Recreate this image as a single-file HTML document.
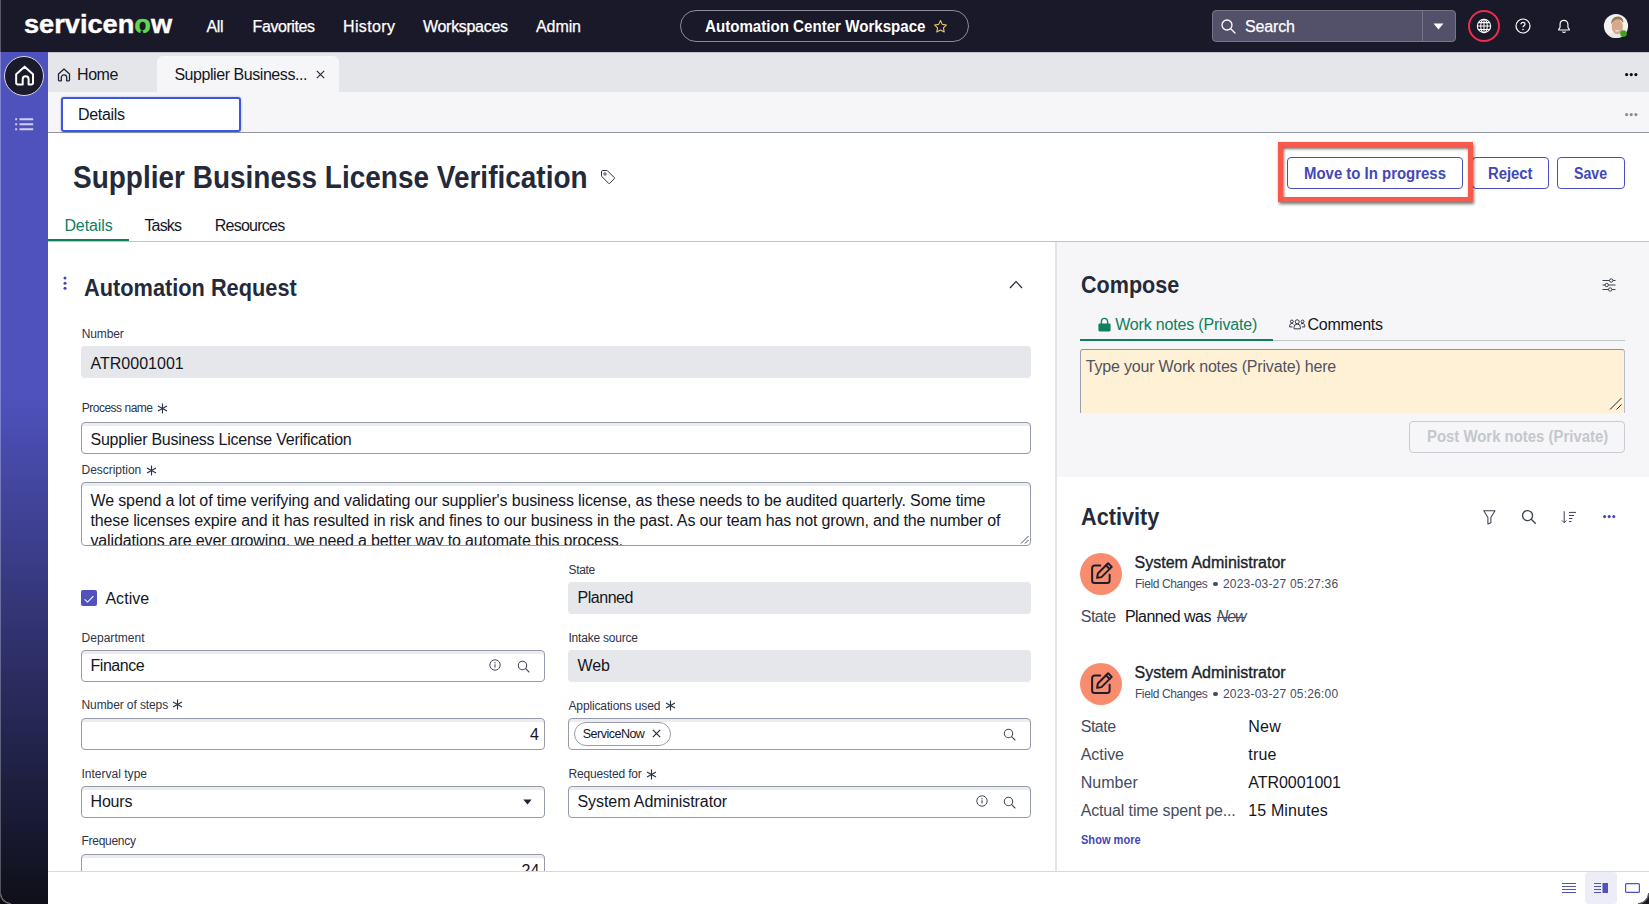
<!DOCTYPE html>
<html lang="en">
<head>
<meta charset="utf-8">
<title>Supplier Business License Verification | Automation Center Workspace</title>
<style>
*{box-sizing:border-box;margin:0;padding:0}
html,body{width:1649px;height:904px;overflow:hidden;background:#fff}
body{font-family:"Liberation Sans",sans-serif;color:#14161f;position:relative;font-size:16px}
.abs{position:absolute}
.t{position:absolute;white-space:nowrap;line-height:1;transform-origin:0 50%}
svg{position:absolute;overflow:visible}
/* top bar */
#topbar{left:0;top:0;width:1649px;height:52px;background:#1a1929}
#topbar .t{color:#fff}
#pill{left:680px;top:10px;width:289px;height:32px;border:1px solid #8b8b99;border-radius:16px}
#search{left:1212px;top:10px;width:244px;height:32px;background:#535069;border:1px solid #77758a;border-radius:4px}
#searchdiv{left:1422px;top:10px;width:1px;height:32px;background:#77758a}
/* sidebar */
#sidebar{left:0;top:52px;width:48px;height:852px;background:linear-gradient(180deg,#4f52bd 0%,#4f52bd 40%,#17182e 92%,#0e0f18 100%)}
#homebtn{left:4px;top:56px;width:40px;height:40px;border-radius:50%;background:#1b1a2b;border:1px solid #d4d4e4}
/* tab bar */
#tabbar{left:48px;top:52px;width:1601px;height:40px;background:#e5e6ea;border-top:1px solid #c3c5cd}
#tab2{left:157px;top:56px;width:182px;height:36px;background:#f6f6f8;border-radius:6px 6px 0 0}
#subbar{left:48px;top:92px;width:1601px;height:41px;background:#f6f6f8;border-bottom:1px solid #9096a4}
#detailsbox{left:61px;top:97px;width:180px;height:35px;background:#fff;border:2px solid #3f57e0;border-radius:3px;box-shadow:0 0 2px rgba(63,87,224,.5)}
/* header */
.btn{position:absolute;height:32px;top:157px;border:1px solid #4a4fc0;border-radius:4px;background:#fff}
.btxt{color:#4347b8;font-weight:bold;font-size:16px}
#hl{left:1278px;top:142px;width:195px;height:60px;border:5px solid #f8594a;box-shadow:1px 2px 3px rgba(0,0,0,.55),inset 1px 2px 3px rgba(0,0,0,.55)}
#tabline{left:48px;top:241px;width:1601px;height:1px;background:#c0c3cc}
#tabsel{left:48px;top:239px;width:81px;height:2px;background:#0e8060}
/* panels */
#vsep{left:1055px;top:242px;width:2px;height:629px;background:#e3e4e9}
#compose{left:1057px;top:242px;width:592px;height:235px;background:#f6f6f8}
.ro{position:absolute;background:#e6e7ea;border-radius:4px;height:32px}
.inp{position:absolute;background:#fff;border:1px solid #959bac;border-radius:4px;height:32px;box-shadow:inset 0 3px 0 #ececee}
.lbl{font-size:12.5px;color:#2e3447}
.val{font-size:16px;color:#1f2536}
#bottombar{left:48px;top:871px;width:1601px;height:33px;background:#fff;border-top:1px solid #d8dae0}
#notes{left:1080px;top:349px;width:545px;height:64px;background:#fff1d6;border-top:1px solid #8d91a2;border-left:1px solid #9a9eae;border-right:1px solid #b9bcc6;border-radius:3px 3px 0 0}
#cornerR{left:1638px;top:893px;width:11px;height:11px;background:radial-gradient(circle at 0 0,rgba(0,0,0,0) 9.500px,#77777c 10px,#55555a 10.800px,#18181c 11.800px)}
#cornerL{left:0;top:893px;width:11px;height:11px;background:radial-gradient(circle at 100% 0,rgba(0,0,0,0) 9.500px,#77777c 10px,#55555a 10.800px,#0a0a0c 11.800px)}
#edgeL{left:0;top:0;width:1px;height:894px;background:rgba(255,255,255,.28)}
</style>
</head>
<body>
<div class="abs" id="topbar"></div>
<div class="abs" id="sidebar"></div>
<div class="abs" id="tabbar"></div>
<div class="abs" id="tab2"></div>
<div class="abs" id="subbar"></div>
<div class="abs" id="detailsbox"></div>
<div class="abs" id="tabline"></div>
<div class="abs" id="tabsel"></div>
<div class="abs" id="compose"></div>
<div class="abs" id="vsep"></div>
<div class="t" id="logo" style="left:24.4px;top:12px;font-size:25.5px;font-weight:bold;color:#fff;transform:scaleX(1.066);-webkit-text-stroke:0.4px #fff">servicen<span style="color:#62d84e;-webkit-text-stroke-color:#62d84e">o</span>w</div>
<svg style="left:140.200px;top:29.800px" width="3.600" height="4" viewBox="0 0 3.600 4"><path d="M0 4L.8 .500h2L3.600 4z" fill="#1a1929"/></svg>
<div class="t" style="left:206.4px;top:19px;font-size:16px;letter-spacing:-0.291px;color:#fff;-webkit-text-stroke:0.25px #fff">All</div>
<div class="t" style="left:252.6px;top:19px;font-size:16px;letter-spacing:-0.425px;color:#fff;-webkit-text-stroke:0.25px #fff">Favorites</div>
<div class="t" style="left:343px;top:19px;font-size:16px;letter-spacing:0.370px;color:#fff;-webkit-text-stroke:0.25px #fff">History</div>
<div class="t" style="left:423px;top:19px;font-size:16px;letter-spacing:-0.304px;color:#fff;-webkit-text-stroke:0.25px #fff">Workspaces</div>
<div class="t" style="left:536px;top:19px;font-size:16px;letter-spacing:-0.090px;color:#fff;-webkit-text-stroke:0.25px #fff">Admin</div>
<div class="abs" id="pill"></div>
<div class="t" style="left:705px;top:19px;font-size:16px;transform:scaleX(0.9442);color:#fff;font-weight:bold">Automation Center Workspace</div>
<svg style="left:933px;top:19px" width="15" height="15" viewBox="0 0 24 24"><path d="M12 2.500l2.900 6.100 6.600.9-4.800 4.600 1.200 6.600L12 17.500l-5.900 3.200 1.200-6.600L2.500 9.500l6.600-.9z" fill="none" stroke="#e9c46a" stroke-width="1.800" stroke-linejoin="round"/></svg>
<div class="abs" id="search"></div>
<div class="abs" id="searchdiv"></div>
<svg style="left:1220px;top:18px" width="17" height="17" viewBox="0 0 17 17"><circle cx="7" cy="7" r="5" fill="none" stroke="#fff" stroke-width="1.300"/><path d="M10.700 10.700L15 15" stroke="#fff" stroke-width="1.300" stroke-linecap="round"/></svg>
<div class="t" style="left:1245px;top:19px;font-size:16px;letter-spacing:-0.141px;color:#fff;-webkit-text-stroke:0.25px #fff">Search</div>
<svg style="left:1433px;top:23px" width="11" height="7" viewBox="0 0 11 7"><path d="M0.500 0.500h10L5.500 6.500z" fill="#fff"/></svg>
<svg style="left:1466.800px;top:9.300px" width="34" height="34" viewBox="0 0 34 34"><circle cx="17" cy="17" r="15" fill="none" stroke="#ee2f4a" stroke-width="2"/><g fill="none" stroke="#fff" stroke-width="1.050"><circle cx="17" cy="17" r="6.700"/><ellipse cx="17" cy="17" rx="3.300" ry="6.700"/><path d="M10.300 17h13.400M11.300 13.600h11.400M11.300 20.400h11.400M17 10.300v13.400"/></g></svg>
<svg style="left:1515.400px;top:17.500px" width="16" height="16" viewBox="0 0 16 16"><circle cx="8" cy="8" r="7" fill="none" stroke="#fff" stroke-width="1.200"/><path d="M6 6.300c0-1.200.9-2 2-2s2 .8 2 1.900c0 1.500-2 1.600-2 3.100" fill="none" stroke="#fff" stroke-width="1.200"/><circle cx="8" cy="11.500" r=".800" fill="#fff"/></svg>
<svg style="left:1556.700px;top:19px" width="14" height="15" viewBox="0 0 16 17"><path d="M8 1.500c-2.800 0-4.500 2-4.500 4.600v3.200L2 11.800v.7h12v-.7l-1.500-2.500V6.100c0-2.600-1.700-4.600-4.500-4.600z" fill="none" stroke="#fff" stroke-width="1.300" stroke-linejoin="round"/><path d="M6.300 14.200c.3.800.9 1.200 1.700 1.200s1.400-.4 1.700-1.200" fill="none" stroke="#fff" stroke-width="1.300"/></svg>
<svg style="left:1603px;top:13.300px" width="26" height="26" viewBox="0 0 26 26"><defs><clipPath id="avc"><circle cx="13" cy="13" r="12.100"/></clipPath></defs><circle cx="13" cy="13" r="12.100" fill="#f4f2f1"/><g clip-path="url(#avc)"><path d="M3 26c1-4 4-6.500 10.500-6.500S23 22 24 26z" fill="#e9e7e6"/><ellipse cx="14.300" cy="13.800" rx="5.600" ry="7.400" fill="#d8a88c"/><path d="M8.300 11.500c-.6-5 2.500-8 6.500-8 3.500 0 6 2.500 5.400 6.500-1.500-2.500-3-3.500-5.500-3.500-3 0-5 2-6.400 5z" fill="#9a7654"/><path d="M11.500 17.200c1.500 1.600 4.300 1.600 5.800-.2-1.600.6-4.200.7-5.800.2z" fill="#fff"/></g><circle cx="20.500" cy="20.600" r="3.300" fill="#3fa51f"/></svg>
<div class="abs" id="homebtn"></div>
<svg style="left:12.500px;top:64.300px" width="23.200" height="23.200" viewBox="0 0 22 22"><path d="M3 9.700L11 2.500l8 7.200v8.100a1.700 1.700 0 0 1-1.700 1.700h-2.500v-5.100a2.800 2.800 0 0 0-5.600 0v5.100H4.700A1.700 1.700 0 0 1 3 17.800z" fill="none" stroke="#fff" stroke-width="1.900" stroke-linejoin="round"/></svg>
<svg style="left:15px;top:117px" width="19" height="14" viewBox="0 0 19 14"><g stroke="#cfd0ef" stroke-width="1.900"><path d="M.2 2.200h1.900M4.500 2.200H18.200M.2 7.200h1.900M4.500 7.200H18.200M.2 12.200h1.900M4.500 12.200H18.200"/></g></svg>
<svg style="left:57px;top:68px" width="14" height="14" viewBox="0 0 14 14"><path d="M1.500 6L7 1l5.500 5v6a.8.800 0 0 1-.8.800H9.700V9.500a2.700 2.700 0 0 0-5.400 0v3.300H2.300a.8.800 0 0 1-.8-.8z" fill="none" stroke="#1f2536" stroke-width="1.300" stroke-linejoin="round"/></svg>
<div class="t" style="left:77px;top:67px;font-size:16px;letter-spacing:-0.429px">Home</div>
<div class="t" style="left:174.4px;top:67px;font-size:16px;letter-spacing:-0.442px">Supplier Business...</div>
<svg style="left:316px;top:70px" width="9" height="9" viewBox="0 0 9 9"><path d="M.8.800l7.400 7.400M8.200.800L.8 8.200" stroke="#1f2536" stroke-width="1.100"/></svg>
<svg style="left:1624.5px;top:72.6px" width="12.600" height="3.200" viewBox="0 0 12.600 3.200"><circle cx="1.600" cy="1.600" r="1.600" fill="#0c0d14"/><circle cx="6.250" cy="1.600" r="1.600" fill="#0c0d14"/><circle cx="10.900" cy="1.600" r="1.600" fill="#0c0d14"/></svg>
<div class="t" style="left:78px;top:107px;font-size:16px;letter-spacing:-0.318px">Details</div>
<svg style="left:1624.5px;top:112.5px" width="12.600" height="3.200" viewBox="0 0 12.600 3.200"><circle cx="1.600" cy="1.600" r="1.600" fill="#8a8b94"/><circle cx="6.250" cy="1.600" r="1.600" fill="#8a8b94"/><circle cx="10.900" cy="1.600" r="1.600" fill="#8a8b94"/></svg>
<div class="t" style="left:72.7px;top:162px;font-size:31.5px;transform:scaleX(0.8881);color:#252a3a;font-weight:bold">Supplier Business License Verification</div>
<svg style="left:600px;top:169px" width="16" height="16" viewBox="0 0 16 16"><path d="M1.500 2.500a1 1 0 0 1 1-1h4.300a1 1 0 0 1 .7.300l6.700 6.700a1 1 0 0 1 0 1.400l-4.300 4.300a1 1 0 0 1-1.400 0L1.800 7.500a1 1 0 0 1-.3-.7z" fill="none" stroke="#2d3344" stroke-width="1"/><circle cx="5" cy="5" r="1.200" fill="none" stroke="#2d3344" stroke-width=".900"/></svg>
<div class="btn" style="left:1287px;width:176px"></div>
<div class="t" style="left:1303.8px;top:166px;font-size:16px;transform:scaleX(0.9340);color:#4347b8;font-weight:bold">Move to In progress</div>
<div class="btn" style="left:1472px;width:77px"></div>
<div class="t" style="left:1487.8px;top:166px;font-size:16px;transform:scaleX(0.9265);color:#4347b8;font-weight:bold">Reject</div>
<div class="btn" style="left:1557px;width:68px"></div>
<div class="t" style="left:1574.2px;top:166px;font-size:16px;transform:scaleX(0.8856);color:#4347b8;font-weight:bold">Save</div>
<div class="abs" id="hl"></div>
<div class="t" style="left:64.4px;top:218px;font-size:16px;letter-spacing:-0.084px;color:#0e8060">Details</div>
<div class="t" style="left:144.4px;top:218px;font-size:16px;letter-spacing:-0.827px">Tasks</div>
<div class="t" style="left:214.7px;top:218px;font-size:16px;letter-spacing:-0.736px">Resources</div>
<svg style="left:63px;top:276px" width="4" height="14" viewBox="0 0 4 14"><circle cx="2" cy="2" r="1.500" fill="#4347b8"/><circle cx="2" cy="7.200" r="1.500" fill="#4347b8"/><circle cx="2" cy="12.200" r="1.500" fill="#4347b8"/></svg>
<div class="t" style="left:83.5px;top:276px;font-size:24px;transform:scaleX(0.9066);color:#252a3a;font-weight:bold">Automation Request</div>
<svg style="left:1008.500px;top:280.200px" width="14" height="9" viewBox="0 0 14 9"><path d="M1 8l6-6.500L13 8" fill="none" stroke="#1f2536" stroke-width="1.150"/></svg>
<div class="t" style="left:81.75px;top:328px;font-size:12px;letter-spacing:-0.138px;color:#2e3447">Number</div>
<div class="ro" style="left:81px;top:346px;width:950px"></div>
<div class="t" style="left:90.5px;top:356px;font-size:16px;letter-spacing:0.016px">ATR0001001</div>
<div class="t" style="left:81.75px;top:402px;font-size:12px;letter-spacing:-0.496px;color:#2e3447">Process name</div>
<svg style="left:157.0px;top:403.3px" width="11" height="11" viewBox="0 0 11 11"><path d="M5.500 .600v9.800M1 2.900l9 5.200M10 2.900l-9 5.200" stroke="#2e3447" stroke-width="1.150" fill="none"/></svg>
<div class="inp" style="left:81px;top:422px;width:950px"></div>
<div class="t" style="left:90.5px;top:432px;font-size:16px;letter-spacing:-0.247px">Supplier Business License Verification</div>
<div class="t" style="left:81.5px;top:464px;font-size:12px;letter-spacing:-0.033px;color:#2e3447">Description</div>
<svg style="left:145.5px;top:465.1px" width="11" height="11" viewBox="0 0 11 11"><path d="M5.500 .600v9.800M1 2.900l9 5.200M10 2.900l-9 5.200" stroke="#2e3447" stroke-width="1.150" fill="none"/></svg>
<div class="inp" style="left:81px;top:482px;width:950px;height:64px;overflow:hidden"><div class="t dl" style="left:8.5px;top:10px;font-size:16px;letter-spacing:-0.134px;color:#14161f">We spend a lot of time verifying and validating our supplier's business license, as these needs to be audited quarterly. Some time</div><div class="t dl" style="left:8.5px;top:30px;font-size:16px;letter-spacing:-0.147px;color:#14161f">these licenses expire and it has resulted in risk and fines to our business in the past. As our team has not grown, and the number of</div><div class="t dl" style="left:8.5px;top:50px;font-size:16px;letter-spacing:-0.145px;color:#14161f">validations are ever growing, we need a better way to automate this process.</div></div>
<svg style="left:1020px;top:535px" width="9" height="9" viewBox="0 0 9 9"><path d="M8.500 1L1 8.500M8.500 5L5 8.500" stroke="#4b5060" stroke-width="1"/></svg>
<div class="abs" style="left:81px;top:590px;width:16px;height:16px;background:#4f52bd;border-radius:2px"></div><svg style="left:84px;top:594.500px" width="10" height="8" viewBox="0 0 10 8"><path d="M.6 4.300l3 2.800L9.400 1.200" fill="none" stroke="#fff" stroke-width="1.050"/></svg>
<div class="t" style="left:105.4px;top:591px;font-size:16px;letter-spacing:0.044px">Active</div>
<div class="t" style="left:568.5px;top:564px;font-size:12px;letter-spacing:-0.333px;color:#2e3447">State</div>
<div class="ro" style="left:568px;top:582px;width:463px"></div>
<div class="t" style="left:577.5px;top:590px;font-size:16px;letter-spacing:-0.470px">Planned</div>
<div class="t" style="left:81.5px;top:632px;font-size:12px;letter-spacing:0.044px;color:#2e3447">Department</div>
<div class="inp" style="left:81px;top:650px;width:464px"></div>
<div class="t" style="left:90.5px;top:658px;font-size:16px;letter-spacing:-0.470px">Finance</div>
<svg style="left:489.2px;top:659.2px" width="12" height="12" viewBox="0 0 12 12"><circle cx="6" cy="6" r="5.200" fill="none" stroke="#454b5c" stroke-width="1"/><path d="M6 5.300v3.200" stroke="#454b5c" stroke-width="1.100"/><circle cx="6" cy="3.700" r=".700" fill="#454b5c"/></svg>
<svg style="left:516.5px;top:659.5px" width="13" height="13" viewBox="0 0 13 13"><circle cx="5.500" cy="5.500" r="4.200" fill="none" stroke="#454b5c" stroke-width="1.100"/><path d="M8.600 8.600l3.400 3.400" stroke="#454b5c" stroke-width="1.100" stroke-linecap="round"/></svg>
<div class="t" style="left:568.5px;top:632px;font-size:12px;letter-spacing:-0.212px;color:#2e3447">Intake source</div>
<div class="ro" style="left:568px;top:650px;width:463px"></div>
<div class="t" style="left:577.5px;top:658px;font-size:16px;letter-spacing:-0.055px">Web</div>
<div class="t" style="left:81.5px;top:699px;font-size:12px;letter-spacing:-0.096px;color:#2e3447">Number of steps</div>
<svg style="left:171.8px;top:699.4px" width="11" height="11" viewBox="0 0 11 11"><path d="M5.500 .600v9.800M1 2.900l9 5.200M10 2.900l-9 5.200" stroke="#2e3447" stroke-width="1.150" fill="none"/></svg>
<div class="inp" style="left:81px;top:718px;width:464px"></div>
<div class="t" style="left:530px;top:727px;font-size:16px;letter-spacing:0.394px">4</div>
<div class="t" style="left:568.5px;top:700px;font-size:12px;letter-spacing:-0.135px;color:#2e3447">Applications used</div>
<svg style="left:664.8px;top:700.4px" width="11" height="11" viewBox="0 0 11 11"><path d="M5.500 .600v9.800M1 2.900l9 5.200M10 2.900l-9 5.200" stroke="#2e3447" stroke-width="1.150" fill="none"/></svg>
<div class="inp" style="left:568px;top:718px;width:463px"></div>
<div class="abs" style="left:574px;top:722px;width:97px;height:24px;border:1px solid #9a9ead;border-radius:12px;background:#fff"></div>
<div class="t" style="left:582.8px;top:728px;font-size:12.5px;letter-spacing:-0.510px">ServiceNow</div>
<svg style="left:652px;top:729px" width="9" height="9" viewBox="0 0 9 9"><path d="M.8.800l7.400 7.400M8.200.800L.8 8.200" stroke="#1f2536" stroke-width="1.100"/></svg>
<svg style="left:1003.3px;top:727.8px" width="13" height="13" viewBox="0 0 13 13"><circle cx="5.500" cy="5.500" r="4.200" fill="none" stroke="#454b5c" stroke-width="1.100"/><path d="M8.600 8.600l3.400 3.400" stroke="#454b5c" stroke-width="1.100" stroke-linecap="round"/></svg>
<div class="t" style="left:81.5px;top:768px;font-size:12px;letter-spacing:0.010px;color:#2e3447">Interval type</div>
<div class="inp" style="left:81px;top:786px;width:464px"></div>
<div class="t" style="left:90.5px;top:794px;font-size:16px;letter-spacing:-0.172px">Hours</div>
<svg style="left:523px;top:799px" width="9" height="6" viewBox="0 0 9 6"><path d="M.3.500h8.400L4.500 5.500z" fill="#1f2536"/></svg>
<div class="t" style="left:568.5px;top:768px;font-size:12px;letter-spacing:-0.174px;color:#2e3447">Requested for</div>
<svg style="left:646.2px;top:768.7px" width="11" height="11" viewBox="0 0 11 11"><path d="M5.500 .600v9.800M1 2.900l9 5.200M10 2.900l-9 5.200" stroke="#2e3447" stroke-width="1.150" fill="none"/></svg>
<div class="inp" style="left:568px;top:786px;width:463px"></div>
<div class="t" style="left:577.5px;top:794px;font-size:16px;letter-spacing:-0.077px">System Administrator</div>
<svg style="left:976px;top:795.2px" width="12" height="12" viewBox="0 0 12 12"><circle cx="6" cy="6" r="5.200" fill="none" stroke="#454b5c" stroke-width="1"/><path d="M6 5.300v3.200" stroke="#454b5c" stroke-width="1.100"/><circle cx="6" cy="3.700" r=".700" fill="#454b5c"/></svg>
<svg style="left:1003.3px;top:795.5px" width="13" height="13" viewBox="0 0 13 13"><circle cx="5.500" cy="5.500" r="4.200" fill="none" stroke="#454b5c" stroke-width="1.100"/><path d="M8.600 8.600l3.400 3.400" stroke="#454b5c" stroke-width="1.100" stroke-linecap="round"/></svg>
<div class="t" style="left:81.5px;top:835px;font-size:12px;letter-spacing:-0.288px;color:#2e3447">Frequency</div>
<div class="inp" style="left:81px;top:854px;width:464px"></div>
<div class="t" style="left:521.5px;top:863px;font-size:16px;letter-spacing:0.003px">24</div>
<div class="t" style="left:1080.7px;top:273px;font-size:24px;transform:scaleX(0.8989);color:#252a3a;font-weight:bold">Compose</div>
<svg style="left:1602px;top:278px" width="14" height="14" viewBox="0 0 14 14"><g fill="none" stroke="#3a4052" stroke-width="1"><path d="M.5 2.500h7M11 2.500h2.500M.5 7h2.500M6.500 7h7M.5 11.500h6M10 11.500h3.500"/><circle cx="9.200" cy="2.500" r="1.700"/><circle cx="4.700" cy="7" r="1.700"/><circle cx="8.200" cy="11.500" r="1.700"/></g></svg>
<div class="abs" style="left:1080px;top:340px;width:545px;height:1px;background:#c4c6ce"></div>
<div class="abs" style="left:1080px;top:339px;width:193px;height:2px;background:#0e8060"></div>
<svg style="left:1098px;top:317px" width="13" height="15" viewBox="0 0 13 15"><path d="M3.400 7V4.500a3.100 3.100 0 0 1 6.200 0V7" fill="none" stroke="#0e8060" stroke-width="1.400"/><rect x=".4" y="6.600" width="12.200" height="7.800" rx="1.300" fill="#0e8060"/></svg>
<div class="t" style="left:1115.2px;top:317px;font-size:16px;letter-spacing:-0.181px;color:#0e8060">Work notes (Private)</div>
<svg style="left:1289.300px;top:319.300px" width="16.400" height="10.500" viewBox="0 0 17 11"><g fill="none" stroke="#1f2536" stroke-width=".950"><circle cx="8.500" cy="2.900" r="2.100"/><path d="M5.200 10.300V8.600a3.300 3.300 0 0 1 6.600 0v1.700z"/><circle cx="2.900" cy="2.600" r="1.500"/><path d="M.6 8.300V6.900a2.300 2.300 0 0 1 4.100-1.400M.6 8.300h3"/><circle cx="14.100" cy="2.600" r="1.500"/><path d="M16.400 8.300V6.900a2.300 2.300 0 0 0-4.100-1.400M16.400 8.300h-3"/></g></svg>
<div class="t" style="left:1307.6px;top:317px;font-size:16px;letter-spacing:-0.280px">Comments</div>
<div class="abs" id="notes"></div>
<div class="t" style="left:1085.7px;top:359px;font-size:16px;letter-spacing:-0.180px;color:#50545f">Type your Work notes (Private) here</div>
<svg style="left:1609px;top:397px" width="13" height="13" viewBox="0 0 13 13"><path d="M12.500 1L1 12.500M12.500 7.500L7.500 12.500" stroke="#1f2536" stroke-width="1"/></svg>
<div class="abs" style="left:1409px;top:421px;width:216px;height:32px;border:1px solid #c9ccd4;border-radius:4px;background:#f6f6f8"></div>
<div class="t" style="left:1426.8px;top:429px;font-size:16px;transform:scaleX(0.9320);color:#c4c7cf;font-weight:bold">Post Work notes (Private)</div>
<div class="t" style="left:1080.7px;top:505px;font-size:24px;transform:scaleX(0.9031);color:#252a3a;font-weight:bold">Activity</div>
<svg style="left:1482.500px;top:509.700px" width="13" height="15" viewBox="0 0 13 15"><path d="M.8 .8h11.200L7.900 7.500v5.200l-3 1.300V7.500z" fill="none" stroke="#3a4052" stroke-width="1.050" stroke-linejoin="round"/></svg>
<svg style="left:1521.05px;top:508.54999999999995px" width="15.5" height="15.5" viewBox="0 0 13 13"><circle cx="5.500" cy="5.500" r="4.200" fill="none" stroke="#3a4052" stroke-width="1.100"/><path d="M8.600 8.600l3.400 3.400" stroke="#3a4052" stroke-width="1.100" stroke-linecap="round"/></svg>
<svg style="left:1561px;top:510px" width="16" height="14" viewBox="0 0 16 14"><g fill="none" stroke="#3a4052" stroke-width="1"><path d="M3.200 1.200v11.500M.9 10.400l2.300 2.300 2.300-2.300M8 2.400h7M8 5.500h5M8 8.500h3.500M8 11.600h2.500"/></g></svg>
<svg style="left:1602.800px;top:515.400px" width="12.400" height="3.200" viewBox="0 0 12.400 3.200"><circle cx="1.600" cy="1.600" r="1.550" fill="#4347b8"/><circle cx="6.200" cy="1.600" r="1.550" fill="#4347b8"/><circle cx="10.800" cy="1.600" r="1.550" fill="#4347b8"/></svg>
<div class="abs" style="left:1080.300px;top:552.9px;width:42px;height:42px;border-radius:50%;background:#f98b6e"></div>
<svg style="left:1088.500px;top:560.9px" width="25" height="25" viewBox="0 0 20 20"><g fill="none" stroke="#1b1f2c" stroke-width="1.600" stroke-linejoin="round" stroke-linecap="round"><path d="M9 3.500H4.500A2 2 0 0 0 2.500 5.500v10a2 2 0 0 0 2 2h10a2 2 0 0 0 2-2V11"/><path d="M15.300 1.800l2.900 2.900-8.200 8.200-3.500.6.600-3.500z"/><path d="M13.600 3.500l2.900 2.900"/></g></svg>
<div class="t" style="left:1134.5px;top:555px;font-size:16px;letter-spacing:0.002px;color:#1a1f2e;-webkit-text-stroke:0.35px #1a1f2e">System Administrator</div>
<div class="t" style="left:1134.9px;top:578px;font-size:12px;letter-spacing:-0.374px;color:#454c60">Field Changes</div>
<div class="abs" style="left:1213.400px;top:581.8px;width:4.400px;height:4.400px;border-radius:50%;background:#454c60"></div>
<div class="t" style="left:1222.9px;top:578px;font-size:12px;letter-spacing:0.209px;color:#454c60">2023-03-27 05:27:36</div>
<div class="t" style="left:1080.7px;top:609px;font-size:16px;letter-spacing:-0.465px;color:#454c60">State</div>
<div class="t" style="left:1124.9px;top:609px;font-size:16px;letter-spacing:-0.512px">Planned was</div>
<div class="t" style="left:1216.8px;top:609px;font-size:16px;letter-spacing:-1.108px;color:#454c60;font-style:italic;text-decoration:line-through">New</div>
<div class="abs" style="left:1080.300px;top:662.8px;width:42px;height:42px;border-radius:50%;background:#f98b6e"></div>
<svg style="left:1088.500px;top:670.8px" width="25" height="25" viewBox="0 0 20 20"><g fill="none" stroke="#1b1f2c" stroke-width="1.600" stroke-linejoin="round" stroke-linecap="round"><path d="M9 3.500H4.500A2 2 0 0 0 2.500 5.500v10a2 2 0 0 0 2 2h10a2 2 0 0 0 2-2V11"/><path d="M15.300 1.800l2.900 2.900-8.200 8.200-3.500.6.600-3.500z"/><path d="M13.600 3.500l2.900 2.900"/></g></svg>
<div class="t" style="left:1134.5px;top:665px;font-size:16px;letter-spacing:0.002px;color:#1a1f2e;-webkit-text-stroke:0.35px #1a1f2e">System Administrator</div>
<div class="t" style="left:1134.9px;top:688px;font-size:12px;letter-spacing:-0.374px;color:#454c60">Field Changes</div>
<div class="abs" style="left:1213.400px;top:691.7px;width:4.400px;height:4.400px;border-radius:50%;background:#454c60"></div>
<div class="t" style="left:1222.9px;top:688px;font-size:12px;letter-spacing:0.209px;color:#454c60">2023-03-27 05:26:00</div>
<div class="t" style="left:1080.7px;top:719px;font-size:16px;letter-spacing:-0.465px;color:#454c60">State</div>
<div class="t" style="left:1248.3px;top:719px;font-size:16px;letter-spacing:0.192px">New</div>
<div class="t" style="left:1080.7px;top:747px;font-size:16px;letter-spacing:-0.056px;color:#454c60">Active</div>
<div class="t" style="left:1248.3px;top:747px;font-size:16px;letter-spacing:0.174px">true</div>
<div class="t" style="left:1080.7px;top:775px;font-size:16px;letter-spacing:0.039px;color:#454c60">Number</div>
<div class="t" style="left:1248.3px;top:775px;font-size:16px;letter-spacing:-0.045px">ATR0001001</div>
<div class="t" style="left:1080.7px;top:803px;font-size:16px;letter-spacing:-0.146px;color:#454c60">Actual time spent pe...</div>
<div class="t" style="left:1248.3px;top:803px;font-size:16px;letter-spacing:0.126px">15 Minutes</div>
<div class="t" style="left:1080.7px;top:834px;font-size:12px;transform:scaleX(0.9214);color:#4347b8;font-weight:bold">Show more</div>
<div class="abs" id="bottombar"></div>
<div class="abs" style="left:1585px;top:872px;width:32px;height:32px;background:#ededf8;border-radius:4px"></div>
<svg style="left:1562px;top:883px" width="14" height="10" viewBox="0 0 14 10"><path d="M0 .5h14M0 3.500h14M0 6.500h14M0 9.500h14" stroke="#4f52bd" stroke-width="1"/></svg>
<svg style="left:1594px;top:883px" width="14" height="10" viewBox="0 0 14 10"><path d="M0 .5h7M0 3.500h7M0 6.500h7M0 9.500h7" stroke="#4f52bd" stroke-width="1"/><rect x="8.500" y="0" width="5.500" height="10" fill="#4f52bd"/></svg>
<svg style="left:1625px;top:883px" width="15" height="10" viewBox="0 0 15 10"><rect x=".6" y=".6" width="13.800" height="8.800" rx="1" fill="none" stroke="#4f52bd" stroke-width="1.200"/></svg>
<div class="abs" id="edgeL"></div><div class="abs" id="cornerR"></div><div class="abs" id="cornerL"></div>
</body>
</html>
